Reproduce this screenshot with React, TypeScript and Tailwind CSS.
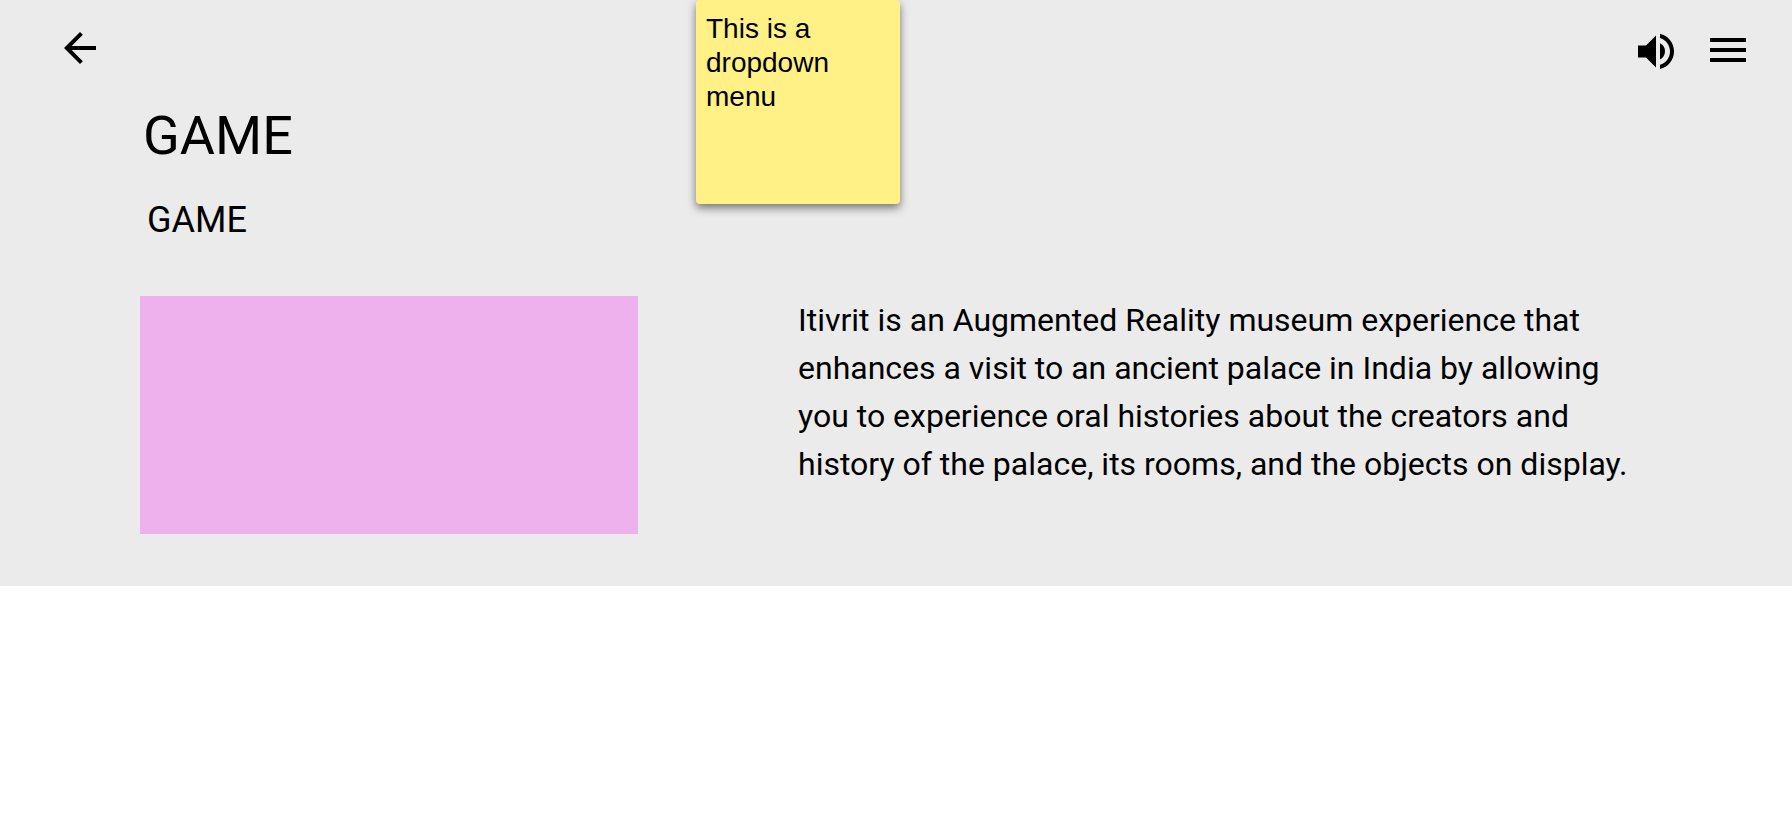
export default function App() {
  return (
    <div className="relative min-h-screen bg-white text-black font-['Roboto',sans-serif]">
      <section className="bg-[#ebebeb] pb-[52px]">
        <header className="flex items-start justify-between pl-14 pr-10 pt-6">
          <button type="button" aria-label="Back">
            <svg className="block size-12" viewBox="0 0 24 24" fill="currentColor" aria-hidden="true">
              <path d="M20 11H7.83l5.59-5.59L12 4l-8 8 8 8 1.41-1.41L7.83 13H20v-2z" />
            </svg>
          </button>
          <div className="flex items-center gap-6 pt-0.5">
            <button type="button" aria-label="Sound">
              <svg className="block size-12" viewBox="0 0 24 24" fill="currentColor" aria-hidden="true">
                <path d="M3 9.7v6h4l5 5v-16l-5 5H3zm13.5 3A4.5 4.5 0 0 0 14 8.67v8.05c1.48-.73 2.5-2.25 2.5-4.02zM14 3.93v2.06c2.89.86 5 3.54 5 6.71s-2.11 5.85-5 6.71v2.06c4.01-.91 7-4.49 7-8.77s-2.99-7.86-7-8.77z" />
              </svg>
            </button>
            <button type="button" aria-label="Menu">
              <svg className="block size-12" viewBox="0 0 24 24" fill="currentColor" aria-hidden="true">
                <path d="M3 18h18v-2H3v2zm0-5h18v-2H3v2zm0-7v2h18V6H3z" />
              </svg>
            </button>
          </div>
        </header>
        <main className="pl-[140px] pr-40">
          <h1 className="pl-[3px] pt-[30px] text-[54px] leading-[64px]">GAME</h1>
          <h2 className="pl-[7px] pt-[30px] text-[36px] leading-[44px]">GAME</h2>
          <div className="mt-[54px] flex items-start gap-40">
            <div className="h-[238px] w-[498px] shrink-0 bg-[#eeb1ed]" />
            <p className="max-w-[836px] text-[32px] leading-[48px]">
              Itivrit is an Augmented Reality museum experience that enhances a visit to an ancient
              palace in India by allowing you to experience oral histories about the creators and
              history of the palace, its rooms, and the objects on display.
            </p>
          </div>
        </main>
      </section>
      <aside className="absolute left-[696px] top-0 size-[204px] rounded-[4px] bg-[#fff185] px-2.5 py-3 font-['Liberation_Sans',sans-serif] text-[28px] leading-[34px] shadow-[0_4px_8px_rgba(0,0,0,0.5)]">
        <p>This is a dropdown menu</p>
      </aside>
    </div>
  );
}
